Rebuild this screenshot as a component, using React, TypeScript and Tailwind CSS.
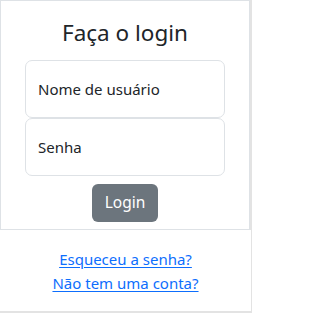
import { useState } from 'react'

export default function App() {
  const [username, setUsername] = useState('')
  const [password, setPassword] = useState('')

  return (
    <div
      className="w-[252px] h-[313px] overflow-hidden bg-[#e3e3e3] text-[#212529]"
      style={{ fontFamily: '"Noto Sans", "Open Sans", sans-serif' }}
    >
      <div className="w-[250px] h-[230px] bg-white border border-[#dee2e6] flex flex-col items-center">
        <h1 className="mt-[17px] text-[22.5px] leading-[29px] font-normal">Faça o login</h1>

        <form className="mt-[13px] w-[200px] flex flex-col items-center" onSubmit={(e) => e.preventDefault()}>
          <div className="relative w-full h-[58px]">
            <input
              type="text"
              value={username}
              onChange={(e) => setUsername(e.target.value)}
              className="w-full h-full rounded-[7px] border border-[#dee2e6] bg-white px-3 text-[15px] outline-none"
            />
            {!username && (
              <label className="pointer-events-none absolute inset-0 flex items-center px-[13px] text-[15px]">
                Nome de usuário
              </label>
            )}
          </div>
          <div className="relative w-full h-[58px]">
            <input
              type="password"
              value={password}
              onChange={(e) => setPassword(e.target.value)}
              className="w-full h-full rounded-[7px] border border-[#dee2e6] bg-white px-3 text-[15px] outline-none"
            />
            {!password && (
              <label className="pointer-events-none absolute inset-0 flex items-center px-[13px] text-[15px]">
                Senha
              </label>
            )}
          </div>

          <button
            type="submit"
            className="mt-[8px] w-[66px] h-[38px] rounded-[6px] bg-[#6c757d] text-white text-[15.5px]"
          >
            Login
          </button>
        </form>
      </div>

      <div className="w-[251px] h-[81px] bg-white flex flex-col items-center pt-[17px] text-[15px] leading-[24px]">
        <a href="#" className="text-[#0d6efd] underline underline-offset-2">
          Esqueceu a senha?
        </a>
        <a href="#" className="text-[#0d6efd] underline underline-offset-2">
          Não tem uma conta?
        </a>
      </div>
    </div>
  )
}
